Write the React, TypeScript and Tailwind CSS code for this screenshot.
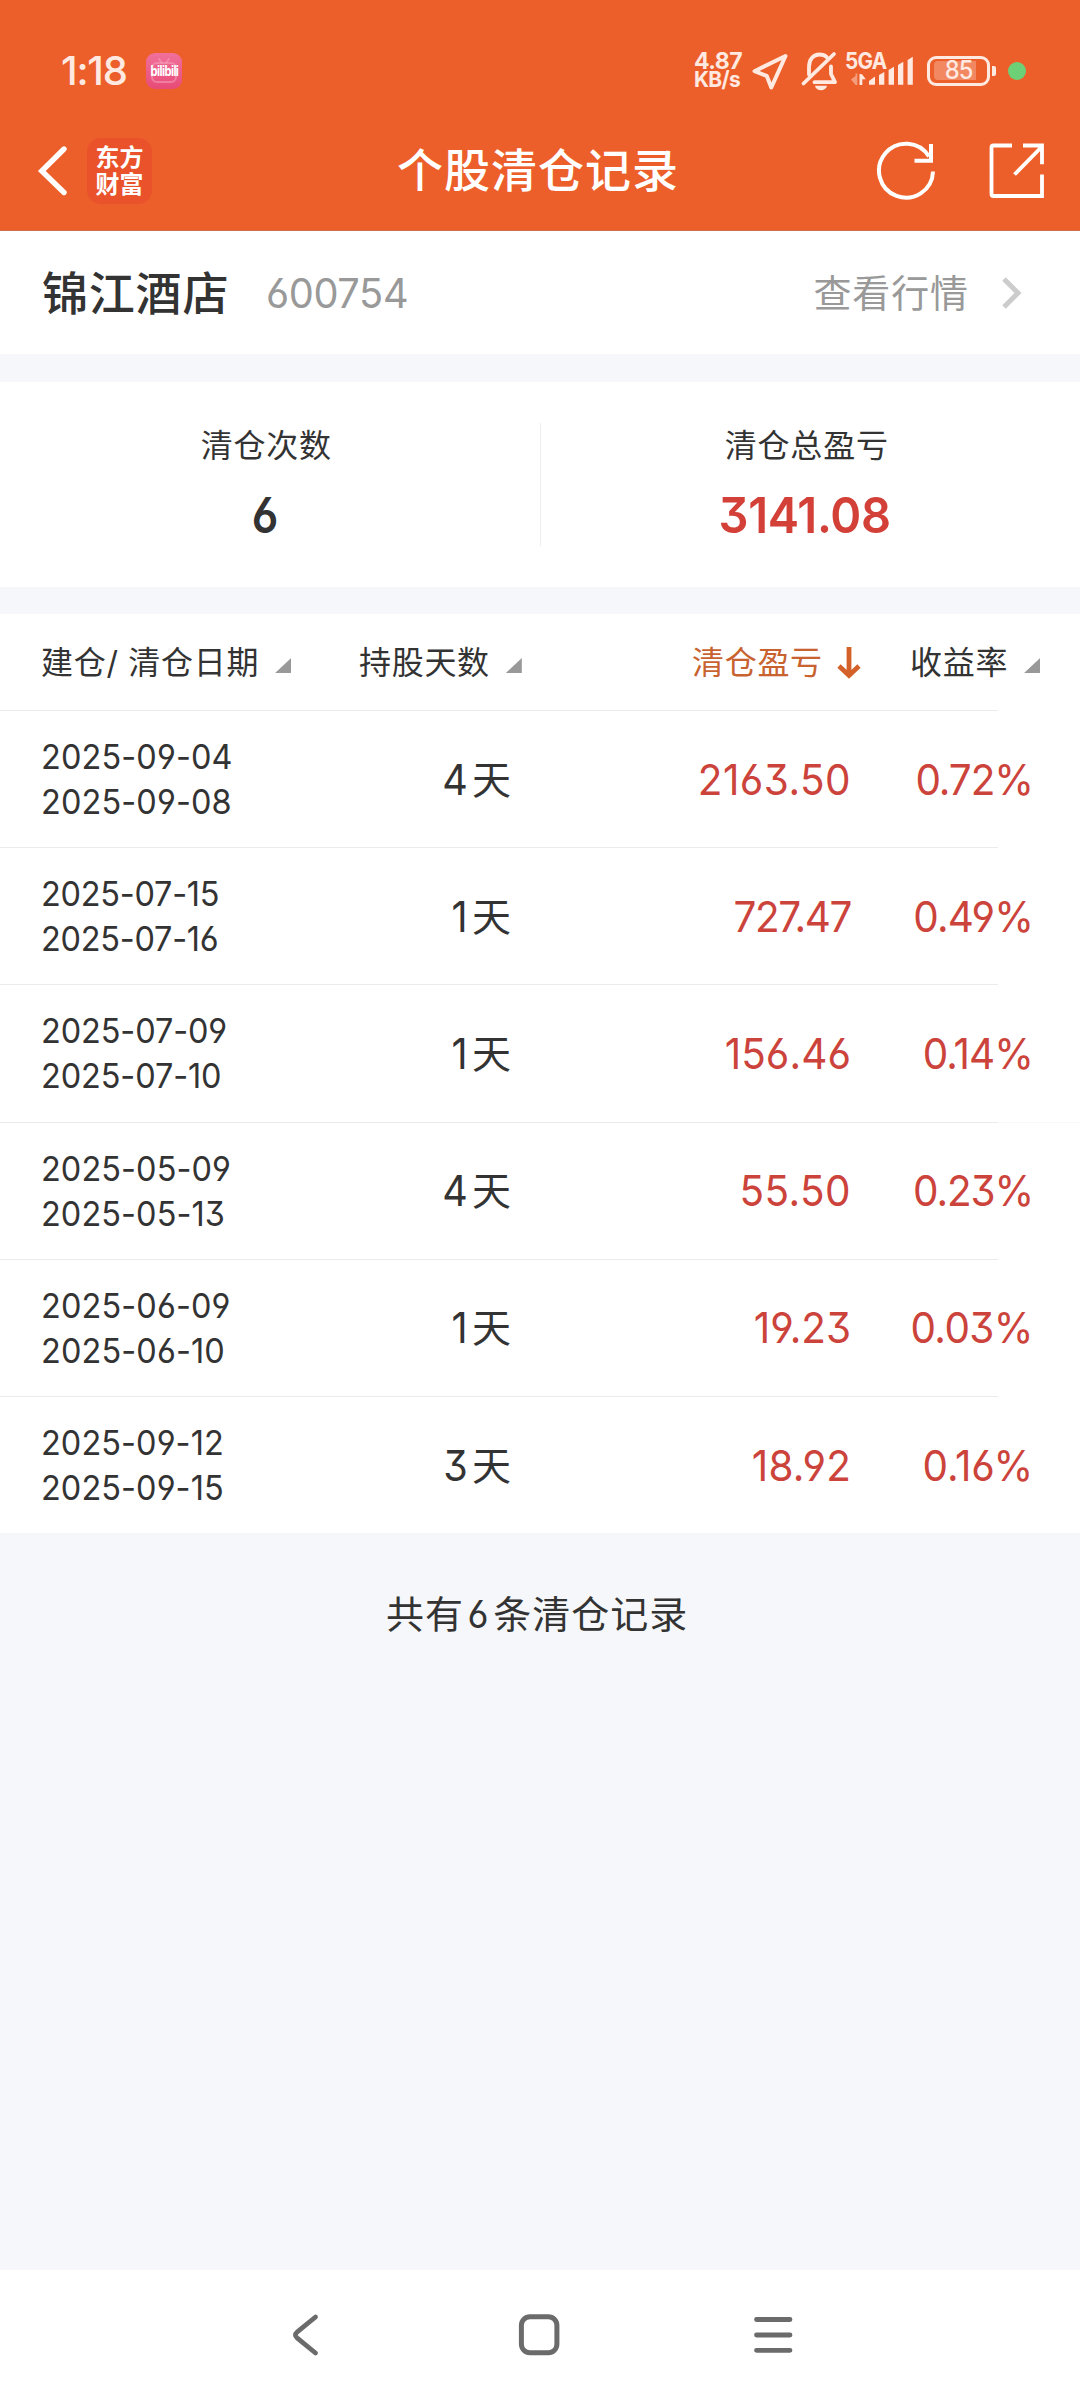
import type { ReactNode } from "react";

type RecordRow = {
  open: string;
  close: string;
  dateTracking: string;
  days: string;
  profit: string;
  profitTracking: string;
  rate: string;
  rateTracking: string;
};

const rows: RecordRow[] = [
  { open: "2025-09-04", close: "2025-09-08", dateTracking: "tracking-[0.15px]", days: "4", profit: "2163.50", profitTracking: "tracking-[0.5px]", rate: "0.72%", rateTracking: "tracking-[-1.1px]" },
  { open: "2025-07-15", close: "2025-07-16", dateTracking: "tracking-[-0.25px]", days: "1", profit: "727.47", profitTracking: "tracking-[-1.5px]", rate: "0.49%", rateTracking: "tracking-[-0.9px]" },
  { open: "2025-07-09", close: "2025-07-10", dateTracking: "tracking-[-0.1px]", days: "1", profit: "156.46", profitTracking: "tracking-[0.1px]", rate: "0.14%", rateTracking: "tracking-[-1px]" },
  { open: "2025-05-09", close: "2025-05-13", dateTracking: "tracking-[0.1px]", days: "4", profit: "55.50", profitTracking: "tracking-[0.5px]", rate: "0.23%", rateTracking: "tracking-[-1.2px]" },
  { open: "2025-06-09", close: "2025-06-10", dateTracking: "tracking-[0.15px]", days: "1", profit: "19.23", profitTracking: "tracking-[0px]", rate: "0.03%", rateTracking: "tracking-[-0.6px]" },
  { open: "2025-09-12", close: "2025-09-15", dateTracking: "tracking-[0.1px]", days: "3", profit: "18.92", profitTracking: "tracking-[0.2px]", rate: "0.16%", rateTracking: "tracking-[-0.1px]" },
];

function BiliIcon() {
  return (
    <div className="relative ml-[19px] flex h-9 w-9 items-center justify-center overflow-hidden rounded-[9px] bg-linear-to-b from-[#f0709b] to-[#e84a77]">
      <svg className="absolute inset-0" width="36" height="36" viewBox="0 0 36 36" fill="none" stroke="#f59bb8" strokeOpacity="0.6" strokeWidth="2" strokeLinecap="round">
        <rect x="6" y="10" width="24" height="19" rx="5" />
        <path d="M13 6l3 4M23 6l-3 4" />
      </svg>
      <span className="relative scale-x-[0.8] text-[14px] leading-none font-bold tracking-[-0.7px] text-white">bilibili</span>
    </div>
  );
}

function StatusBar() {
  return (
    <div className="flex h-[79px] items-center pl-[61px] text-[#ffe9e0]">
      <span className="w-[66px] text-[40px] leading-none font-medium tracking-[-1.2px]">1:18</span>
      <BiliIcon />
      <div className="ml-auto flex h-[38px] items-center pr-[54px]">
        <div className="flex w-[56px] -translate-y-px flex-col text-[23px] leading-[18px] font-bold">
          <span className="tracking-[-0.5px]">4.87</span>
          <span className="origin-left scale-x-[0.95] text-[22px] font-bold tracking-[-0.7px]">KB/s</span>
        </div>
        <svg width="40" height="40" viewBox="750 51 40 40" fill="none" stroke="currentColor" strokeWidth="4" strokeLinejoin="round">
          <path d="M785.5 56L754.5 71.2l12.2 4.6 4.6 11.7z" />
        </svg>
        <svg className="ml-[9px]" width="40" height="40" viewBox="799.5 51 40 40" fill="none" stroke="currentColor" strokeWidth="3.8" strokeLinecap="round" strokeLinejoin="round">
          <path d="M804 83.5L834.5 54" />
          <path d="M809.5 74.5V67c0-8 4.500-12.500 10.500-12.500 3 0 5.500 1 7.500 2.800M831.500 66.500v7.500l4 8.200H815" />
          <path d="M815.500 85.800h12c-.5 3-3 4.400-6 4.400s-5.500-1.400-6-4.400z" fill="currentColor" stroke="none" />
        </svg>
        <div className="relative ml-[6px] h-10 w-[70px]">
          <span className="absolute top-px left-0 origin-left scale-x-[0.9] text-[23px] leading-[18px] font-bold tracking-[-0.8px]">5GA</span>
          <svg className="absolute inset-0" width="70" height="40" viewBox="845 51 70 40" fill="currentColor">
            <path d="M851 79.500l4.500-3.500v-2.500h1.800v11.500h-1.800z" opacity="0.45" />
            <path d="M859.500 74l2.500.2 3.800 5h-3.500V85h-2.800z" />
            <path d="M869 81l6-4.500v8.300h-6zM879 75l5.300-3v12.800H879zM888.600 70l5.400-3.200v18h-5.400zM898 65l5.300-3.200v23H898zM907.600 60l5.200-3.200v28h-5.200z" />
          </svg>
        </div>
        <div className="relative ml-[12px] flex h-[30px] w-[63px] items-center justify-center rounded-[9px] border-[3.5px] border-current">
          <div className="absolute top-[2px] left-1 h-[19px] w-[42px] rounded-l-[4px] bg-[#ffe9e0]/30" />
          <span className="relative scale-x-[0.95] text-[25px] leading-none font-medium tracking-[-1px]">85</span>
        </div>
        <div className="ml-[2px] h-[10px] w-1 rounded-r-[2px] bg-current" />
        <div className="ml-3 h-[18px] w-[18px] rounded-full bg-[#6dd077]" />
      </div>
    </div>
  );
}

function TitleBar() {
  return (
    <div className="flex h-[121px] items-center pl-9 text-white">
      <svg width="34" height="52" viewBox="36 145 34 52" fill="none" stroke="currentColor" strokeWidth="5.4">
        <path d="M64 149L41.8 171l22.200 21.500" strokeLinecap="round" />
      </svg>
      <div className="ml-[17px] flex h-[66px] w-[65px] flex-col items-center justify-center rounded-[14px] bg-[#e9522a] text-[24px] leading-[27px] font-bold">
        <span>东方</span>
        <span>财富</span>
      </div>
      <h1 className="ml-[245px] -translate-y-px text-[46px] leading-none font-medium tracking-[1px]">个股清仓记录</h1>
      <svg className="ml-auto" width="62" height="62" viewBox="875 139.5 62 62" fill="none" stroke="currentColor" strokeWidth="4">
        <path d="M933 171a27 27 0 1 1-4-15" />
        <path d="M931 143.500v16.800h-16.500" />
      </svg>
      <svg className="mr-[33px] ml-[50px]" width="60" height="62" viewBox="987 139.5 60 62" fill="none" stroke="currentColor" strokeWidth="3.8">
        <path d="M1012 145H993.500a2 2 0 0 0-2 2v46.500a2 2 0 0 0 2 2H1042V174M1023 145h19v18.700M1014.500 174L1042 146" />
      </svg>
    </div>
  );
}

function StockHeader() {
  return (
    <div className="flex h-[123px] items-center bg-white pr-[55px] pl-[42px]">
      <span className="text-[46px] leading-none font-medium tracking-[0.8px] text-[#333]">锦江酒店</span>
      <span className="ml-[37px] origin-left translate-y-px scale-x-[0.97] text-[41px] leading-none tracking-[-0.4px] text-[#999]">600754</span>
      <span className="mr-[32px] ml-auto text-[38px] leading-none tracking-[0.9px] text-[#999]">查看行情</span>
      <svg width="24" height="34" viewBox="0 0 24 34" fill="none" stroke="#ccc" strokeWidth="5">
        <path d="M3 3l14 14L3 31" />
      </svg>
    </div>
  );
}

function Stat({ label, children }: { label: string; children: ReactNode }) {
  return (
    <div className="flex flex-1 flex-col items-center pt-12 pr-[7px]">
      <span className="text-[32px] leading-[32px] tracking-[0.8px] text-[#333]">{label}</span>
      <div className="mt-[25px] text-[50px] leading-[56px] font-semibold">{children}</div>
    </div>
  );
}

function SortMark() {
  return <div className="h-[15px] w-[16px] translate-y-[3px] bg-[#999] [clip-path:polygon(100%_0,100%_100%,0_100%)]" />;
}

function TableHeader() {
  return (
    <div className="flex h-[96px] items-center pt-px text-[32px] leading-none tracking-[0.7px] text-[#333]">
      <div className="flex w-[359px] items-center pl-[41px]">
        <span className="mr-[16px] whitespace-pre">建仓/ 清仓日期</span>
        <SortMark />
      </div>
      <div className="flex w-[333px] items-center">
        <span className="mr-4">持股天数</span>
        <SortMark />
      </div>
      <div className="flex w-[218px] items-center text-[#c8622f]">
        <span className="mr-[14px]">清仓盈亏</span>
        <svg width="24" height="32" viewBox="0 0 24 32" fill="none" stroke="#d4612a" strokeWidth="4.8">
          <path d="M12 0v28M2 19l10 9.500L22 19" />
        </svg>
      </div>
      <span className="mr-[16px]">收益率</span>
      <SortMark />
    </div>
  );
}

function Row({ row, wideRule }: { row: RecordRow; wideRule: boolean }) {
  return (
    <div className="flex h-[137.2px] flex-col">
      <div className={wideRule ? "h-px shrink-0 bg-linear-to-r from-[#ebebeb] from-[92.4%] to-[#f8f8f8] to-[92.4%]" : "h-px w-[998px] shrink-0 bg-[#ebebeb]"} />
      <div className="grid flex-1 grid-cols-[470px_340px_182px] items-center pl-[41px] text-[#333]">
        <div className="flex items-center justify-between">
          <div className={"flex origin-left scale-x-[0.94] flex-col text-[34.5px] leading-[45px] " + row.dateTracking}>
            <span>{row.open}</span>
            <span>{row.close}</span>
          </div>
          <div className="flex items-center text-[39px] leading-none">
            <span className="origin-right scale-x-[0.92] text-[43px]">{row.days}</span>
            <span className="ml-1">天</span>
          </div>
        </div>
        <span className={"origin-right scale-x-[0.94] text-right text-[43px] leading-none text-[#cb433b] " + row.profitTracking}>{row.profit}</span>
        <span className={"origin-right scale-x-[0.94] text-right text-[43px] leading-none text-[#cb433b] " + row.rateTracking}>{row.rate}</span>
      </div>
    </div>
  );
}

function NavBar() {
  return (
    <div className="flex h-[130px] items-center justify-between bg-white px-[284px]">
      <svg width="44" height="48" viewBox="284.5 2311 44 48" fill="none" stroke="#6b6b6b" strokeWidth="4.8" strokeLinecap="round" strokeLinejoin="round">
        <path d="M316 2317l-18.500 15.200q-3.200 2.800 0 5.600L316 2353" />
      </svg>
      <svg width="44" height="48" viewBox="518 2311 44 48" fill="none" stroke="#6b6b6b" strokeWidth="5">
        <rect x="521.4" y="2316.7" width="35.5" height="36" rx="8.5" />
      </svg>
      <svg width="44" height="48" viewBox="752 2311 44 48" fill="none" stroke="#6b6b6b" strokeWidth="4.8" strokeLinecap="round">
        <path d="M756.500 2319.500h33.500M756.500 2335h33.500M756.500 2350.300h33.500" />
      </svg>
    </div>
  );
}

export default function App() {
  return (
    <div className="flex h-[2400px] w-[1080px] flex-col overflow-hidden bg-[#f6f7fa] font-[Inter,'Noto_Sans_CJK_SC',sans-serif] [font-feature-settings:'cv03','cv04','cv09']">
      <header className="h-[231px] border-b border-[#cb704b] bg-[#ec5f2b] pt-[31px]">
        <StatusBar />
        <TitleBar />
      </header>
      <StockHeader />
      <section className="mt-7 flex h-[205px] bg-white">
        <Stat label="清仓次数">
          <span className="inline-block -translate-x-px scale-x-[0.88] text-[#333]">6</span>
        </Stat>
        <div className="mt-[41px] h-[123px] w-px bg-[#eee]" />
        <Stat label="清仓总盈亏">
          <span className="inline-block -translate-x-[2px] scale-x-[0.94] tracking-[-0.3px] text-[#d34038]">3141.08</span>
        </Stat>
      </section>
      <section className="mt-[27px] h-[919px] bg-white">
        <TableHeader />
        {rows.map((row, i) => (
          <Row key={row.open} row={row} wideRule={i === 3} />
        ))}
      </section>
      <p className="mt-[61px] ml-[386px] flex h-[40px] items-center text-[38px] leading-none tracking-[1px] text-[#333]">
        共有<span className="mx-[3px] scale-x-[0.95]">6</span>条清仓记录
      </p>
      <footer className="mt-auto">
        <NavBar />
      </footer>
    </div>
  );
}
